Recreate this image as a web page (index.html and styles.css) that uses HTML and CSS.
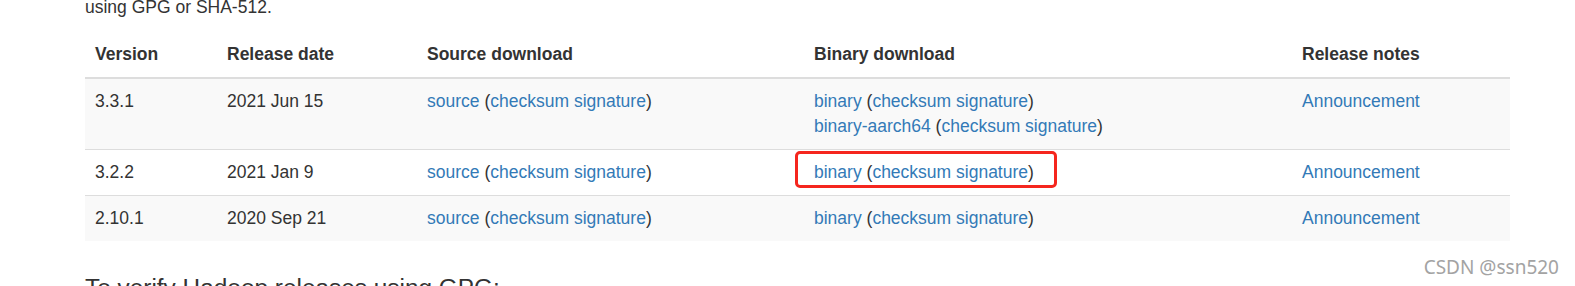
FILE: index.html
```html
<!DOCTYPE html>
<html lang="en">
<head>
<meta charset="utf-8">
<title>Hadoop Releases</title>
<link rel="stylesheet" href="styles.css">
</head>
<body>
<main class="page">
  <p class="intro">using GPG or SHA-512.</p>
  <table class="releases">
    <colgroup>
      <col class="c-version">
      <col class="c-date">
      <col class="c-source">
      <col class="c-binary">
      <col class="c-notes">
    </colgroup>
    <thead>
      <tr>
        <th>Version</th>
        <th>Release date</th>
        <th>Source download</th>
        <th>Binary download</th>
        <th>Release notes</th>
      </tr>
    </thead>
    <tbody>
      <tr>
        <td>3.3.1</td>
        <td>2021 Jun 15</td>
        <td><a href="#">source</a> (<a href="#">checksum</a> <a href="#">signature</a>)</td>
        <td><a href="#">binary</a> (<a href="#">checksum</a> <a href="#">signature</a>)<br><a href="#">binary-aarch64</a> (<a href="#">checksum</a> <a href="#">signature</a>)</td>
        <td><a href="#">Announcement</a></td>
      </tr>
      <tr>
        <td>3.2.2</td>
        <td>2021 Jan 9</td>
        <td><a href="#">source</a> (<a href="#">checksum</a> <a href="#">signature</a>)</td>
        <td><span class="marked"><a href="#">binary</a> (<a href="#">checksum</a> <a href="#">signature</a>)<span class="mark-box"></span></span></td>
        <td><a href="#">Announcement</a></td>
      </tr>
      <tr>
        <td>2.10.1</td>
        <td>2020 Sep 21</td>
        <td><a href="#">source</a> (<a href="#">checksum</a> <a href="#">signature</a>)</td>
        <td><a href="#">binary</a> (<a href="#">checksum</a> <a href="#">signature</a>)</td>
        <td><a href="#">Announcement</a></td>
      </tr>
    </tbody>
  </table>
  <h3 class="section-title">To verify Hadoop releases using GPG:</h3>
</main>
<div class="watermark">CSDN @ssn520</div>
</body>
</html>
```

FILE: styles.css
```css
html, body {
  margin: 0;
  padding: 0;
  background: #fff;
  overflow: hidden;
}

body {
  font-family: "Liberation Sans", Arial, sans-serif;
  font-size: 17.5px;
  line-height: 25px;
  color: #333;
  height: 286px;
  position: relative;
}

.page {
  padding-left: 85px;
  width: 1425px;
  margin-top: -5px;
}

.intro {
  margin: 0 0 12px;
}

a {
  color: #337ab7;
  text-decoration: none;
}

.releases {
  width: 1425px;
  border-collapse: collapse;
  border-spacing: 0;
  table-layout: fixed;
  margin: 0;
}

.c-version { width: 132px; }
.c-date { width: 200px; }
.c-source { width: 387px; }
.c-binary { width: 488px; }
.c-notes { width: 218px; }

.releases th,
.releases td {
  padding: 10px;
  text-align: left;
  vertical-align: top;
}

.releases th {
  font-weight: bold;
  border-bottom: 2px solid #ddd;
}

.releases td {
  border-top: 1px solid #ddd;
}

.releases tbody tr:first-child td {
  border-top: 0;
}

.releases tbody tr:nth-child(odd) {
  background: #f9f9f9;
}

.marked {
  position: relative;
  display: inline-block;
}

.mark-box {
  position: absolute;
  left: -19px;
  top: -9px;
  width: 262px;
  height: 37px;
  box-sizing: border-box;
  border: 3.5px solid #f5261e;
  border-radius: 5px;
}

.section-title {
  margin: 34px 0 0;
  font-family: "Liberation Sans", Arial, sans-serif;
  font-size: 24.4px;
  font-weight: normal;
  line-height: 1.1;
  color: #333;
}

.watermark {
  position: absolute;
  right: 16px;
  top: 257px;
  font-family: "Noto Sans", "DejaVu Sans", sans-serif;
  font-size: 19px;
  line-height: 20px;
  color: #a3a3a3;
  text-shadow: 0 0 2px #fff;
}
```
